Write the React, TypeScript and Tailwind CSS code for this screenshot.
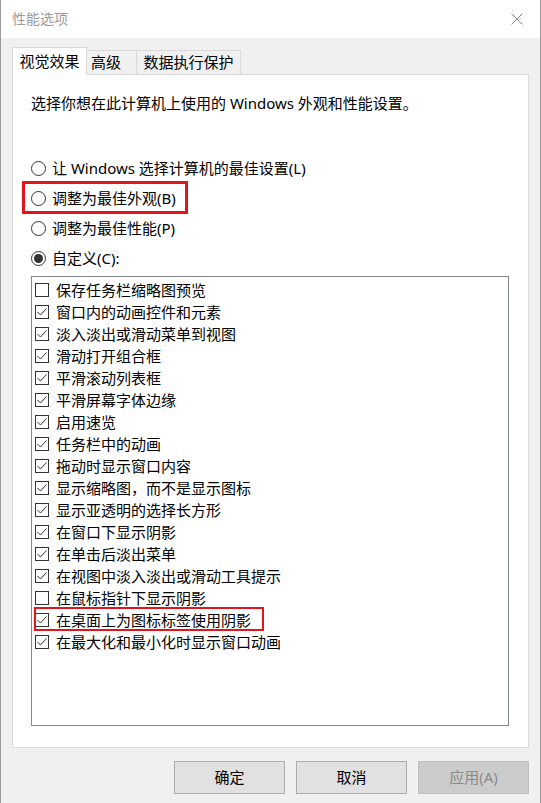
import React from "react";

const items: [string, boolean][] = [
  ["保存任务栏缩略图预览", false],
  ["窗口内的动画控件和元素", true],
  ["淡入淡出或滑动菜单到视图", true],
  ["滑动打开组合框", true],
  ["平滑滚动列表框", true],
  ["平滑屏幕字体边缘", true],
  ["启用速览", true],
  ["任务栏中的动画", true],
  ["拖动时显示窗口内容", true],
  ["显示缩略图，而不是显示图标", true],
  ["显示亚透明的选择长方形", true],
  ["在窗口下显示阴影", true],
  ["在单击后淡出菜单", true],
  ["在视图中淡入淡出或滑动工具提示", true],
  ["在鼠标指针下显示阴影", false],
  ["在桌面上为图标标签使用阴影", true],
  ["在最大化和最小化时显示窗口动画", true],
];

function Radio({ checked }: { checked?: boolean }) {
  return (
    <span className="w-[15px] h-[15px] rounded-full border border-[#333333] bg-white flex items-center justify-center shrink-0">
      {checked && <span className="w-[9px] h-[9px] rounded-full bg-[#333333]" />}
    </span>
  );
}

function Check({ checked }: { checked: boolean }) {
  return (
    <span className="w-[14px] h-[14px] border border-[#333333] bg-white flex items-center justify-center shrink-0">
      {checked && (
        <svg width="12" height="12" viewBox="0 0 12 12">
          <polyline points="1.5,6 4.5,9 10.5,2.5" fill="none" stroke="#333333" strokeWidth="1" />
        </svg>
      )}
    </span>
  );
}

export default function App() {
  return (
    <div className="w-[541px] h-[803px] bg-[#f0f0f0] border-x border-[#9a9a9a] font-['Noto_Sans','Noto_Sans_CJK_SC',sans-serif] text-[15px] text-black leading-none overflow-hidden">
      <div className="h-[38px] bg-white flex items-center justify-between pl-[11px] pr-[17px]">
        <span className="text-[14px] text-[#9a9a9a]">性能选项</span>
        <svg width="12" height="12" viewBox="0 0 12 12">
          <path d="M0.5 0.5 L11.5 11.5 M11.5 0.5 L0.5 11.5" stroke="#8a8a8a" strokeWidth="1" />
        </svg>
      </div>
      <div className="px-[11px] pt-[9px]">
        <div className="flex items-end h-[27px]">
          <div className="relative z-10 h-[28px] -mb-px w-[75px] bg-white border-x border-t border-[#d9d9d9] flex items-center justify-center">
            视觉效果
          </div>
          <div className="h-[24px] w-[50px] border-t border-r border-[#d9d9d9] flex items-center pl-[4px]">
            高级
          </div>
          <div className="h-[24px] w-[104px] border-t border-r border-[#d9d9d9] flex items-center justify-center">
            数据执行保护
          </div>
        </div>
        <div className="h-[674px] bg-white border border-[#d9d9d9] pl-[18px] pt-[18px]">
          <div className="h-[20px] flex items-center">选择你想在此计算机上使用的 Windows 外观和性能设置。</div>
          <div className="mt-[40px] flex flex-col">
            <div className="h-[30px] flex items-center gap-[6px]">
              <Radio />
              <span>让 Windows 选择计算机的最佳设置(L)</span>
            </div>
            <div className="relative h-[30px] flex items-center gap-[6px]">
              <Radio />
              <span>调整为最佳外观(B)</span>
              <div className="absolute left-[-9px] top-[-2px] w-[166px] h-[33px] border-[3px] border-[#e3141b]" />
            </div>
            <div className="h-[30px] flex items-center gap-[6px]">
              <Radio />
              <span>调整为最佳性能(P)</span>
            </div>
            <div className="h-[30px] flex items-center gap-[6px]">
              <Radio checked />
              <span>自定义(C):</span>
            </div>
          </div>
          <div className="mt-[3px] w-[478px] h-[450px] border border-[#828790] bg-white pt-[2px] pl-[3px]">
            {items.map(([label, checked], i) => (
              <div key={i} className="relative h-[22px] flex items-center gap-[7px]">
                <Check checked={checked} />
                <span>{label}</span>
                {i === 15 && (
                  <div className="absolute left-[-1px] top-[-2px] w-[230px] h-[24px] border-2 border-[#e3141b]" />
                )}
              </div>
            ))}
          </div>
        </div>
        <div className="mt-[13px] flex justify-end gap-[11px] pr-[-1px]">
          <div className="w-[111px] h-[33px] bg-[#e1e1e1] border border-[#adadad] flex items-center justify-center">确定</div>
          <div className="w-[111px] h-[33px] bg-[#e1e1e1] border border-[#adadad] flex items-center justify-center">取消</div>
          <div className="w-[111px] h-[33px] bg-[#cccccc] border border-[#bfbfbf] text-[#8a8a8a] flex items-center justify-center">应用(A)</div>
        </div>
      </div>
    </div>
  );
}
